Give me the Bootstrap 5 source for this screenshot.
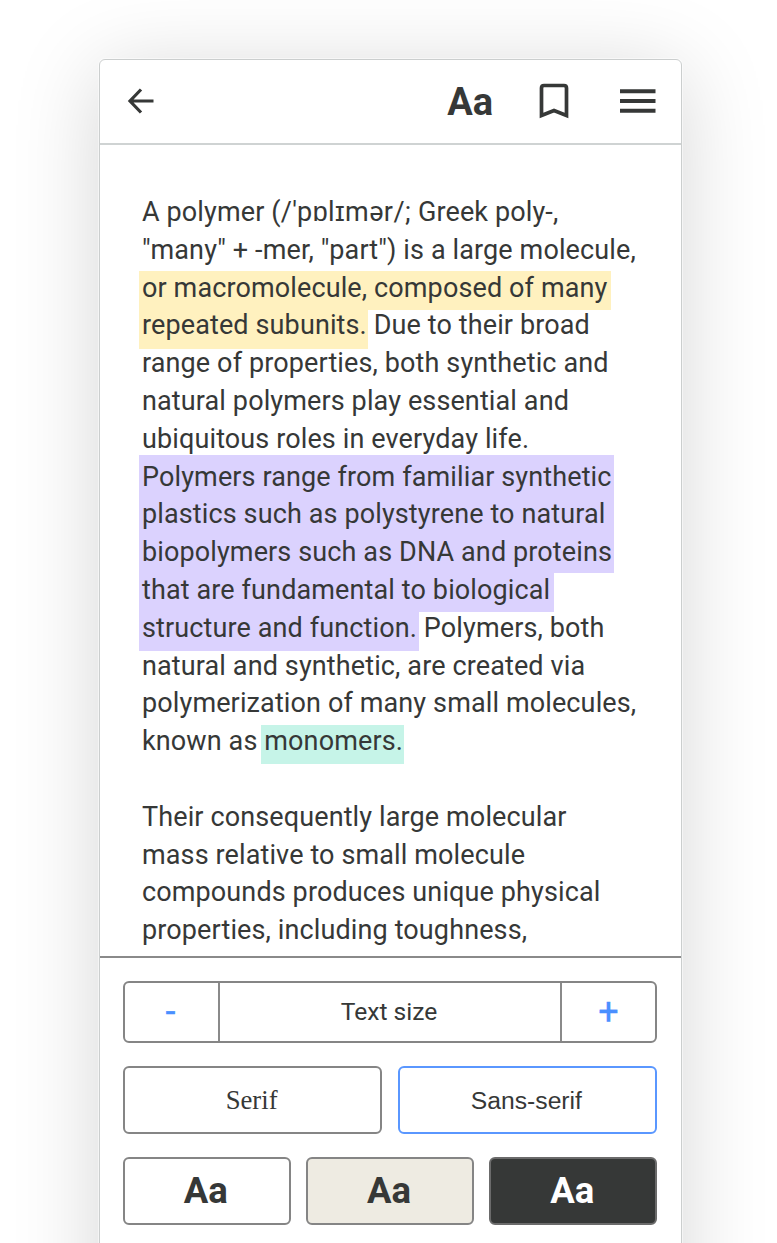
<!DOCTYPE html>
<html lang="en">
<head>
<meta charset="utf-8">
<title>Reader</title>
<link href="https://cdn.jsdelivr.net/npm/bootstrap@5.3.0/dist/css/bootstrap.min.css" rel="stylesheet">
<style>
:root{--ink:#363837;--line:#858585;--accent:#4a8fff}
html,body{height:100%}
body{font-family:Roboto,"Liberation Sans",sans-serif;color:var(--ink);background:#fff;overflow:hidden}
.screen{height:1243px;overflow:hidden}
.phone{width:583px;height:1300px;margin:59px 0 0 99px;background:#fff;border:1px solid #cbcece;border-radius:6px;box-shadow:0 0 0 1px rgba(255,255,255,.5),0 12px 86px rgba(0,0,0,.17)}
.topbar{height:85px;border-bottom:2px solid #cfd3d3;padding:0 25px 2px 27px}
.aa{font-weight:700;font-size:38px;line-height:1;padding-top:2px}
.icon-save{margin-left:46px}
.icon-menu{margin-left:50px}
.reader{height:811px;padding:49px 0 0 42px;overflow:hidden}
.reader p{font-size:27px;line-height:37.8px;margin:0 0 37.8px;white-space:nowrap;letter-spacing:.12px}
.ipa{letter-spacing:.42px}
/* each highlighted line carries its own top, bottom and right bleed */
.hl{--r:3px;margin:0 calc(-1*var(--r)) 0 -3px;padding:var(--t,0) var(--r) var(--b,7px) 3px}
.hl-y{background:#fff1bf}.hl-p{background:#dbd2fe}.hl-g{background:#c6f4e8}
.y1{--t:1px;--r:3.2px;--b:6px}.y2{--r:1px;--b:8px}
.p1{--t:6px;--b:3px;--r:2.6px}.p2{--t:4px;--b:5px;--r:8.6px}.p3{--t:3px;--b:5px;--r:2.4px}.p4{--t:1px;--b:6px;--r:4px}.p5{--b:7px;--r:2.3px}
.g1{--b:7px;--r:.8px}
.panel{border-top:2px solid #8a8a8a;padding:23px 24px 0 23px}
.choice{flex:1 1 0;border:2px solid var(--line);border-radius:6px;height:68px;font-size:25px;background:#fff;color:var(--ink);padding:0 2px 0 0;line-height:1}
.choice-row{gap:15.5px;margin-top:23px}
.choice-row+.choice-row{margin-top:23.4px}
.f-serif{font-family:"Liberation Serif",serif;font-size:26.7px;padding-top:1px}
.f-sans{font-family:"Liberation Sans",sans-serif;font-size:24.7px;border-color:#5a97ff;padding-top:2px}
.theme{font-size:36.5px;font-weight:700}
.theme-sepia{background:#eeebe2}
.theme-dark{background:#363837;color:#fff;border-color:#6b6b6b}
.stepper{height:62px;border:2px solid var(--line);border-radius:6px;font-size:24.6px}
.stepper .end{width:93px;color:var(--accent);font-size:36px;line-height:1;-webkit-text-stroke:.3px var(--accent)}
.stepper .minus{padding-right:2px}
.stepper .mid{border:solid #8a8a8a;border-width:0 2px;padding-right:2px}
</style>
</head>
<body>
<div class="screen">
<main class="phone">
  <header class="topbar d-flex align-items-center">
    <svg width="28" height="28" viewBox="0 0 28 28" fill="none" stroke="#363837" stroke-width="3.200"><path d="M26.500 14H4M14 2.500L3 14L14 25.500"/></svg>
    <span class="aa ms-auto">Aa</span>
    <svg class="icon-save" width="30" height="36" viewBox="0 0 30 36" fill="none" stroke="#363837" stroke-width="3.700"><path d="M2.500 32.500V5Q2.500 2.500 5 2.500H25Q27.500 2.500 27.500 5V32.500L15 27.500Z"/></svg>
    <svg class="icon-menu" width="37" height="26" viewBox="0 0 37 26" fill="#363837"><path d="M1 1.200H36.500V5.200H1ZM1 11H36.500V15H1ZM1 20.800H36.500V24.800H1Z"/></svg>
  </header>
  <article class="reader">
    <p>A polymer (<span class="ipa">/'pɒlɪmər/;</span> Greek poly-,<br>"many" + -mer, "part") is a large molecule,<br><span class="hl hl-y y1">or macromolecule, composed of many</span><br><span class="hl hl-y y2">repeated subunits.</span> Due to their broad<br>range of properties, both synthetic and<br>natural polymers play essential and<br>ubiquitous roles in everyday life.<br><span class="hl hl-p p1">Polymers range from familiar synthetic</span><br><span class="hl hl-p p2">plastics such as polystyrene to natural</span><br><span class="hl hl-p p3">biopolymers such as DNA and proteins</span><br><span class="hl hl-p p4">that are fundamental to biological</span><br><span class="hl hl-p p5">structure and function.</span> Polymers, both<br>natural and synthetic, are created via<br>polymerization of many small molecules,<br>known as <span class="hl hl-g g1">monomers.</span></p>
    <p>Their consequently large molecular<br>mass relative to small molecule<br>compounds produces unique physical<br>properties, including toughness,</p>
  </article>
  <section class="panel">
    <div class="stepper d-flex align-items-stretch">
      <span class="end minus d-flex align-items-center justify-content-center">-</span>
      <span class="mid flex-fill d-flex align-items-center justify-content-center">Text size</span>
      <span class="end d-flex align-items-center justify-content-center">+</span>
    </div>
    <div class="choice-row d-flex">
      <button type="button" class="btn choice f-serif">Serif</button>
      <button type="button" class="btn choice f-sans">Sans-serif</button>
    </div>
    <div class="choice-row d-flex">
      <button type="button" class="btn choice theme">Aa</button>
      <button type="button" class="btn choice theme theme-sepia">Aa</button>
      <button type="button" class="btn choice theme theme-dark">Aa</button>
    </div>
  </section>
</main>
</div>
<script src="https://cdn.jsdelivr.net/npm/bootstrap@5.3.0/dist/js/bootstrap.bundle.min.js"></script>
</body>
</html>
